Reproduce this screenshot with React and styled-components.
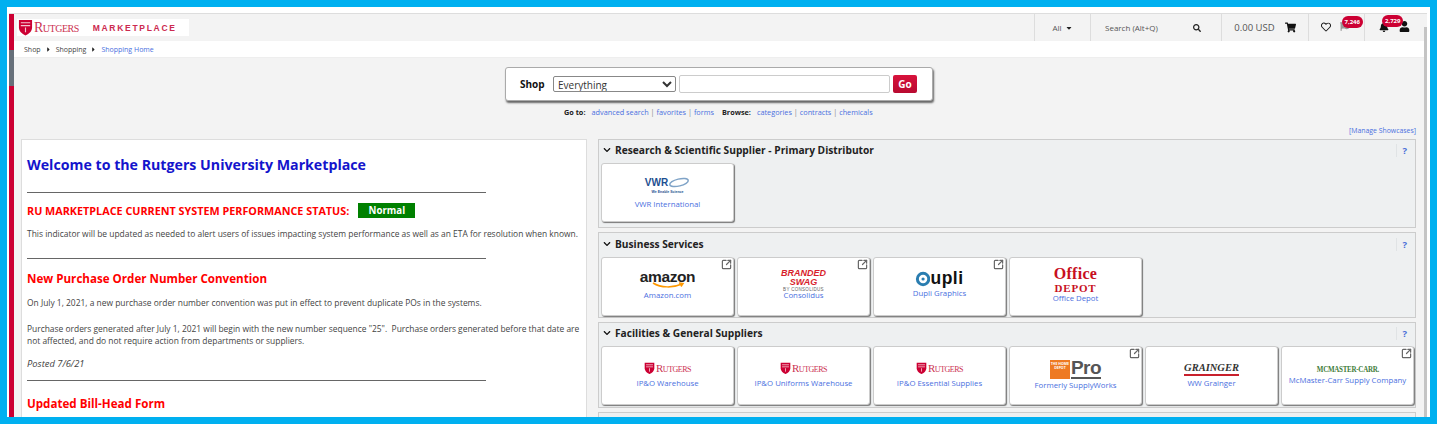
import React from "react"
import styled, { createGlobalStyle } from "styled-components"
import { FaShoppingCart, FaRegHeart, FaBell, FaUser, FaSearch, FaChevronDown, FaFlag, FaCaretRight, FaCaretDown } from "react-icons/fa"
import { SquareArrowOutUpRight } from "lucide-react"

const GlobalStyle = createGlobalStyle`
  html, body { margin: 0; padding: 0; }
  body { font-family: "Open Sans", "Noto Sans", sans-serif; background: #fff; }
  * { box-sizing: border-box; }
`

const Shield = ({ size = 15 }) => (
  <svg width={size} height={size * 1.13} viewBox="0 0 16 18">
    <path d="M1 1h14v8c0 4-3 6.5-7 8.500C4 15.500 1 13 1 9z" fill="#cc0033" />
    <path d="M3 4h10M3 7h10M8 9v5" stroke="#f4c6d0" strokeWidth="1.200" fill="none" />
  </svg>
)

const RutgersLogo = ({ small }) => (
  <RutgersRow $small={small}>
    <Shield size={small ? 11 : 15} />
    <RutgersWord $small={small}>Rutgers</RutgersWord>
  </RutgersRow>
)

const Card = ({ label, external, lift, children }) => (
  <CardBox $lift={lift}>
    {external && (
      <ExtIcon>
        <SquareArrowOutUpRight size={11} strokeWidth={2.6} />
      </ExtIcon>
    )}
    {children}
    <CardLabel>{label}</CardLabel>
  </CardBox>
)

const Section = ({ title, head, pad, raise, children }) => (
  <SectionBox $pad={pad}>
    <SectionHead $head={head} $raise={raise}>
      <FaChevronDown size={8} color="#111" />
      <SectionTitle>{title}</SectionTitle>
      <Help>?</Help>
    </SectionHead>
    <CardRow>{children}</CardRow>
  </SectionBox>
)

const App = () => {
  return (
    <Frame>
      <GlobalStyle />
      <Shell>
        <SideBar>
          <SideChunk $h="36px" />
          <SideChunk $h="36px" $grey />
          <SideChunk $h="400px" />
        </SideBar>
        <Main>
          <Header>
            <LogoBlock>
              <RutgersLogo />
              <MarketWord>Marketplace</MarketWord>
            </LogoBlock>
            <HeaderCell $w="56px">
              All <FaCaretDown size={8} color="#222" style={{ marginLeft: 3 }} />
            </HeaderCell>
            <HeaderCell $w="131px" $between>
              Search (Alt+Q)
              <FaSearch size={8} color="#222" />
            </HeaderCell>
            <HeaderCell $w="87px" $size="9.500px">
              0.00 USD
              <FaShoppingCart size={11} color="#111" style={{ marginLeft: 10 }} />
            </HeaderCell>
            <HeaderCell $w="56px">
              <IconSlot $shift="4px">
                <FaRegHeart size={10} color="#111" />
                <FaFlag size={9} color="#999" style={{ marginLeft: 9 }} />
                <Badge $left="21px">7,246</Badge>
              </IconSlot>
            </HeaderCell>
            <HeaderCell $w="60px">
              <IconSlot>
                <FaBell size={10} color="#111" />
                <FaUser size={11} color="#111" style={{ marginLeft: 10 }} />
                <Badge $left="3px">2,729</Badge>
              </IconSlot>
            </HeaderCell>
          </Header>
          <Crumbs>
            <span>Shop</span>
            <FaCaretRight size={7} color="#222" />
            <span>Shopping</span>
            <FaCaretRight size={7} color="#222" />
            <CrumbLink>Shopping Home</CrumbLink>
          </Crumbs>
          <Content>
            <SearchBox>
              <ShopLabel>Shop</ShopLabel>
              <ShopSelect defaultValue="Everything">
                <option>Everything</option>
              </ShopSelect>
              <ShopInput />
              <GoButton>Go</GoButton>
            </SearchBox>
            <GoTo>
              <b>Go to:</b>
              <LinkGroup>
                <a>advanced search</a> | <a>favorites</a> | <a>forms</a>
              </LinkGroup>
              <b>Browse:</b>
              <LinkGroup>
                <a>categories</a> | <a>contracts</a> | <a>chemicals</a>
              </LinkGroup>
            </GoTo>
            <Manage>[Manage Showcases]</Manage>
            <Columns>
              <LeftPanel>
                <Welcome>Welcome to the Rutgers University Marketplace</Welcome>
                <Rule $top="18px" />
                <StatusRow>
                  <StatusText>RU MARKETPLACE CURRENT SYSTEM PERFORMANCE STATUS:</StatusText>
                  <StatusPill>Normal</StatusPill>
                </StatusRow>
                <Para $top="10px">
                  This indicator will be updated as needed to alert users of issues impacting system performance as well as an ETA for resolution when known.
                </Para>
                <Rule $top="18px" />
                <RedHead $top="12px">New Purchase Order Number Convention</RedHead>
                <Para $top="10px">
                  On July 1, 2021, a new purchase order number convention was put in effect to prevent duplicate POs in the systems.
                </Para>
                <Para $top="14px">
                  Purchase orders generated after July 1, 2021 will begin with the new number sequence "25".  Purchase orders generated before that date are not affected, and do not require action from departments or suppliers.
                </Para>
                <Posted>Posted 7/6/21</Posted>
                <Rule $top="10px" />
                <RedHead $top="15px">Updated Bill-Head Form</RedHead>
              </LeftPanel>
              <RightColumn>
                <Section title="Research & Scientific Supplier - Primary Distributor" head="23px" pad="5px" raise="3px">
                  <Card label="VWR International">
                    <VwrLogo>
                      <VwrMark>
                        VWR
                        <svg width="22" height="11" viewBox="0 0 22 11">
                          <ellipse cx="11" cy="5.500" rx="9.500" ry="3.500" fill="none" stroke="#7fa3c7" strokeWidth="1.500" transform="rotate(-14 11 5.500)" />
                        </svg>
                      </VwrMark>
                      <VwrTag>We Enable Science</VwrTag>
                    </VwrLogo>
                  </Card>
                </Section>
                <Section title="Business Services" head="24px" pad="1px" raise="2px">
                  <Card label="Amazon.com" external lift="4px">
                    <AmazonLogo>
                      amazon
                      <svg width="34" height="6" viewBox="0 0 34 6">
                        <path d="M2 1c8 5 20 5 29 1M28 1l4 .500-2 3" fill="none" stroke="#f90" strokeWidth="1.500" />
                      </svg>
                    </AmazonLogo>
                  </Card>
                  <Card label="Consolidus" external lift="3px">
                    <SwagLogo>
                      Branded<br />Swag
                      <small>by consolidus</small>
                    </SwagLogo>
                  </Card>
                  <Card label="Dupli Graphics" external lift="4px">
                    <DupliLogo>
                      <svg width="15" height="16" viewBox="0 0 13 14">
                        <circle cx="7" cy="7" r="5" fill="none" stroke="#2a7db0" strokeWidth="2.600" />
                        <circle cx="7" cy="7" r="1.400" fill="#2a7db0" />
                      </svg>
                      upli
                    </DupliLogo>
                  </Card>
                  <Card label="Office Depot" lift="4px">
                    <DepotLogo>
                      <DepotTop>Office</DepotTop>
                      <DepotBottom>DEPOT</DepotBottom>
                    </DepotLogo>
                  </Card>
                </Section>
                <Section title="Facilities & General Suppliers" head="23px" pad="2px" raise="3px">
                  <Card label="IP&O Warehouse"><RutgersLogo small /></Card>
                  <Card label="IP&O Uniforms Warehouse"><RutgersLogo small /></Card>
                  <Card label="IP&O Essential Supplies"><RutgersLogo small /></Card>
                  <Card label="Formerly SupplyWorks" external>
                    <ProLogo>
                      <ProSquare>The Home Depot</ProSquare>
                      <ProWord>Pro</ProWord>
                    </ProLogo>
                  </Card>
                  <Card label="WW Grainger">
                    <GraingerLogo>Grainger</GraingerLogo>
                  </Card>
                  <Card label="McMaster-Carr Supply Company" external>
                    <McMasterLogo>McMaster-Carr.</McMasterLogo>
                  </Card>
                </Section>
                <SectionBox />
              </RightColumn>
            </Columns>
          </Content>
        </Main>
        <ScrollGutter>
          <ScrollThumb />
        </ScrollGutter>
      </Shell>
    </Frame>
  )
}
export default App

const Frame = styled.div`
  width: 1437px;
  height: 424px;
  border: 7px solid #00b0f0;
  background: #fff;
  padding: 6px 3px 0 2px;
  overflow: hidden;
`
const Shell = styled.div`
  display: flex;
  height: 100%;
  border-top: 1px solid #ddd;
`
const SideBar = styled.div`
  width: 5px;
  flex: none;
  display: flex;
  flex-direction: column;
`
const SideChunk = styled.div`
  height: ${p => p.$h};
  flex: none;
  background: ${p => (p.$grey ? "#66707a" : "#cc0033")};
`
const Main = styled.div`
  flex: 1;
  min-width: 0;
  display: flex;
  flex-direction: column;
`
const ScrollGutter = styled.div`
  width: 3px;
  flex: none;
  padding-top: 13px;
  background: #f3f3f3;
`
const ScrollThumb = styled.div`
  height: 100%;
  background: #c4c4c4;
`
const Header = styled.div`
  height: 27px;
  flex: none;
  display: flex;
  align-items: stretch;
  background: #f3f3f3;
`
const LogoBlock = styled.div`
  width: 172px;
  height: 17px;
  margin: 5px auto 0 3px;
  padding-left: 1px;
  background: #fff;
  display: flex;
  align-items: center;
`
const RutgersRow = styled.div`
  display: flex;
  align-items: center;
  gap: 1px;
  margin-bottom: ${p => (p.$small ? "3px" : "0")};
`
const RutgersWord = styled.span`
  font-family: "Liberation Serif", serif;
  font-variant: small-caps;
  color: #cc3352;
  font-size: ${p => (p.$small ? "11px" : "14px")};
  letter-spacing: -0.5px;
  text-transform: capitalize;
`
const MarketWord = styled.span`
  margin-left: 14px;
  font-family: "Liberation Sans", sans-serif;
  font-weight: 700;
  font-size: 8.500px;
  letter-spacing: 1.700px;
  text-transform: uppercase;
  color: #cc2a50;
`
const HeaderCell = styled.div`
  width: ${p => p.$w};
  flex: none;
  display: flex;
  align-items: center;
  justify-content: ${p => (p.$between ? "space-between" : "center")};
  padding: ${p => (p.$between ? "0 20px 0 14px" : "0")};
  border-left: 1px solid #ddd;
  font-size: ${p => p.$size || "8px"};
  color: #555;
`
const IconSlot = styled.div`
  position: relative;
  display: flex;
  align-items: center;
  margin: 0 ${p => p.$shift || 0} 2px 0;
`
const Badge = styled.span`
  position: absolute;
  left: ${p => p.$left};
  top: -6px;
  padding: 1px 3px;
  border-radius: 7px;
  background: #cc0033;
  color: #fff;
  font-size: 6px;
  font-weight: 700;
  line-height: 10px;
`
const Crumbs = styled.div`
  height: 16px;
  flex: none;
  display: flex;
  align-items: center;
  gap: 4px;
  padding-left: 10px;
  background: #fff;
  font-size: 7px;
  color: #444;
`
const CrumbLink = styled.span`
  color: #4a6fe0;
`
const Content = styled.div`
  flex: 1;
  min-height: 0;
  background: #f3f3f3;
  border-top: 1px solid #eee;
  padding-top: 9px;
  overflow: hidden;
  display: flex;
  flex-direction: column;
`
const SearchBox = styled.div`
  width: 428px;
  height: 34px;
  flex: none;
  margin-left: 491px;
  padding-left: 14px;
  display: flex;
  align-items: center;
  background: #fff;
  border: 1px solid #aaa;
  border-radius: 3px;
  box-shadow: 1px 2px 2px #666;
`
const ShopLabel = styled.span`
  width: 33px;
  font-size: 10px;
  font-weight: 700;
  color: #111;
`
const ShopSelect = styled.select`
  width: 123px;
  height: 16px;
  padding: 0;
  font-family: "Open Sans", sans-serif;
  font-size: 10px;
  color: #333;
  background: #fff;
  border: 1px solid #888;
  border-radius: 2px;
`
const ShopInput = styled.input`
  width: 211px;
  height: 18px;
  margin-left: 3px;
  background: #fff;
  border: 1px solid #ccc;
  border-radius: 2px;
`
const GoButton = styled.button`
  width: 24px;
  height: 18px;
  margin-left: 3px;
  padding: 0;
  border: 0;
  border-radius: 2px;
  background: linear-gradient(#d8123c, #b80a30);
  color: #fff;
  font-family: "Open Sans", sans-serif;
  font-size: 10px;
  font-weight: 700;
`
const GoTo = styled.div`
  margin: 5px 0 0 550px;
  height: 12px;
  flex: none;
  display: flex;
  align-items: center;
  font-size: 7.300px;
  color: #888;
  white-space: pre;
  b { color: #222; }
  a { color: #4a6fe0; }
`
const LinkGroup = styled.span`
  margin: 0 8px 0 6px;
`
const Manage = styled.div`
  height: 10px;
  flex: none;
  margin: 8px 0 3px;
  padding-right: 8px;
  text-align: right;
  font-size: 6.900px;
  line-height: 10px;
  color: #4a6fe0;
`
const Columns = styled.div`
  display: flex;
  align-items: flex-start;
  gap: 11px;
  margin: 0 8px 0 7px;
`
const LeftPanel = styled.div`
  width: 566px;
  height: 290px;
  flex: none;
  padding: 16px 5px 0;
  background: #fff;
  border: 1px solid #ddd;
  color: #444;
`
const Welcome = styled.h1`
  margin: 0;
  font-size: 14.200px;
  line-height: 18px;
  font-weight: 700;
  color: #1414cc;
`
const Rule = styled.div`
  width: 459px;
  height: 1px;
  margin-top: ${p => p.$top};
  background: #666;
`
const StatusRow = styled.div`
  display: flex;
  align-items: center;
  gap: 9px;
  margin-top: 10px;
`
const StatusText = styled.span`
  font-size: 10.800px;
  font-weight: 700;
  color: #f00;
`
const StatusPill = styled.span`
  width: 57px;
  height: 15px;
  display: flex;
  align-items: center;
  justify-content: center;
  background: #008000;
  color: #fff;
  font-size: 9.700px;
  font-weight: 700;
`
const Para = styled.p`
  margin: ${p => p.$top} 0 0;
  font-size: 8.430px;
  line-height: 12px;
  white-space: pre-wrap;
`
const Posted = styled.p`
  margin: 11px 0 0;
  font-size: 9.400px;
  font-style: italic;
  line-height: 12px;
`
const RedHead = styled.h2`
  margin: ${p => p.$top} 0 0;
  font-size: 11.600px;
  line-height: 16px;
  font-weight: 700;
  color: #f00;
`
const RightColumn = styled.div`
  flex: 1;
  min-width: 0;
  display: flex;
  flex-direction: column;
  gap: 4px;
`
const SectionBox = styled.div`
  background: #eef0f1;
  border: 1px solid #ccc;
  padding: 0 2px ${p => p.$pad || "6px"};
  min-height: 20px;
`
const SectionHead = styled.div`
  height: ${p => p.$head};
  display: flex;
  align-items: center;
  gap: 4px;
  padding: 0 0 ${p => p.$raise || 0} 2px;
`
const SectionTitle = styled.span`
  font-size: 10.200px;
  font-weight: 700;
  color: #222;
`
const Help = styled.span`
  margin-left: auto;
  padding: 0 6px 0 5px;
  font-size: 9.500px;
  font-weight: 700;
  color: #4a6fd8;
  border-left: 1px solid #e0e3e5;
`
const CardRow = styled.div`
  display: flex;
  gap: 3px;
`
const CardBox = styled.div`
  position: relative;
  width: 133px;
  height: 59px;
  flex: none;
  display: flex;
  flex-direction: column;
  align-items: center;
  justify-content: center;
  gap: 1px;
  padding-bottom: ${p => p.$lift || 0};
  background: #fff;
  border: 1px solid #ccc;
  border-radius: 3px;
  box-shadow: 1px 1px 1px #777;
`
const CardLabel = styled.span`
  font-size: 7.800px;
  line-height: 11px;
  color: #4a6fe0;
  white-space: nowrap;
`
const ExtIcon = styled.span`
  position: absolute;
  top: 1px;
  right: 1px;
  display: flex;
  color: #666;
`
const VwrLogo = styled.div`
  height: 22px;
  display: flex;
  flex-direction: column;
  align-items: center;
`
const VwrMark = styled.div`
  display: flex;
  align-items: center;
  height: 14px;
  font-family: "Liberation Sans", sans-serif;
  font-size: 10px;
  font-weight: 700;
  line-height: 14px;
  color: #1d4f91;
`
const VwrTag = styled.span`
  font-family: "Liberation Sans", sans-serif;
  font-size: 3.500px;
  font-weight: 700;
  line-height: 5px;
  color: #1d4f91;
`
const AmazonLogo = styled.div`
  height: 20px;
  display: flex;
  flex-direction: column;
  align-items: center;
  font-family: "Liberation Sans", sans-serif;
  font-size: 15.500px;
  font-weight: 700;
  line-height: 15px;
  letter-spacing: -0.4px;
  color: #222;
  svg { margin-top: -2px; }
`
const SwagLogo = styled.div`
  margin-bottom: -3px;
  text-align: center;
  font-family: "Liberation Sans", sans-serif;
  font-size: 9px;
  font-style: italic;
  font-weight: 700;
  line-height: 9px;
  text-transform: uppercase;
  color: #d81e2c;
  small {
    display: block;
    font-size: 4.500px;
    font-style: normal;
    font-weight: 400;
    line-height: 5px;
    letter-spacing: 0.3px;
    color: #666;
  }
`
const DupliLogo = styled.div`
  height: 17px;
  display: flex;
  align-items: center;
  font-family: "Liberation Sans", sans-serif;
  font-size: 17.500px;
  font-weight: 700;
  letter-spacing: 0.5px;
  color: #111;
`
const DepotLogo = styled.div`
  display: flex;
  flex-direction: column;
  align-items: center;
  margin-bottom: -2px;
  font-family: "Liberation Serif", serif;
  font-weight: 700;
  color: #c8101e;
`
const DepotTop = styled.span`
  font-size: 16px;
  line-height: 18px;
  letter-spacing: 0.3px;
`
const DepotBottom = styled.span`
  font-size: 11px;
  line-height: 11px;
  letter-spacing: 0.8px;
`
const ProLogo = styled.div`
  display: flex;
  align-items: stretch;
  height: 19px;
`
const ProSquare = styled.span`
  width: 20px;
  padding-top: 2px;
  background: #ee7a22;
  color: #fff;
  font-size: 3.500px;
  font-weight: 700;
  line-height: 4px;
  text-align: center;
  text-transform: uppercase;
`
const ProWord = styled.span`
  margin-left: 1px;
  border-bottom: 2px solid #555;
  font-family: "Liberation Sans", sans-serif;
  font-size: 19px;
  font-weight: 700;
  line-height: 16px;
  letter-spacing: -0.5px;
  color: #555;
`
const GraingerLogo = styled.div`
  margin-bottom: 1px;
  padding-bottom: 1px;
  border-bottom: 2px solid #c8202c;
  font-family: "Liberation Serif", serif;
  font-size: 10.500px;
  font-style: italic;
  font-weight: 700;
  line-height: 10px;
  text-transform: uppercase;
  color: #333;
`
const McMasterLogo = styled.div`
  font-family: "Liberation Serif", serif;
  font-size: 8.500px;
  font-weight: 700;
  letter-spacing: -0.3px;
  line-height: 9px;
  text-transform: uppercase;
  color: #3f7d3a;
  transform: scaleX(0.82);
`
